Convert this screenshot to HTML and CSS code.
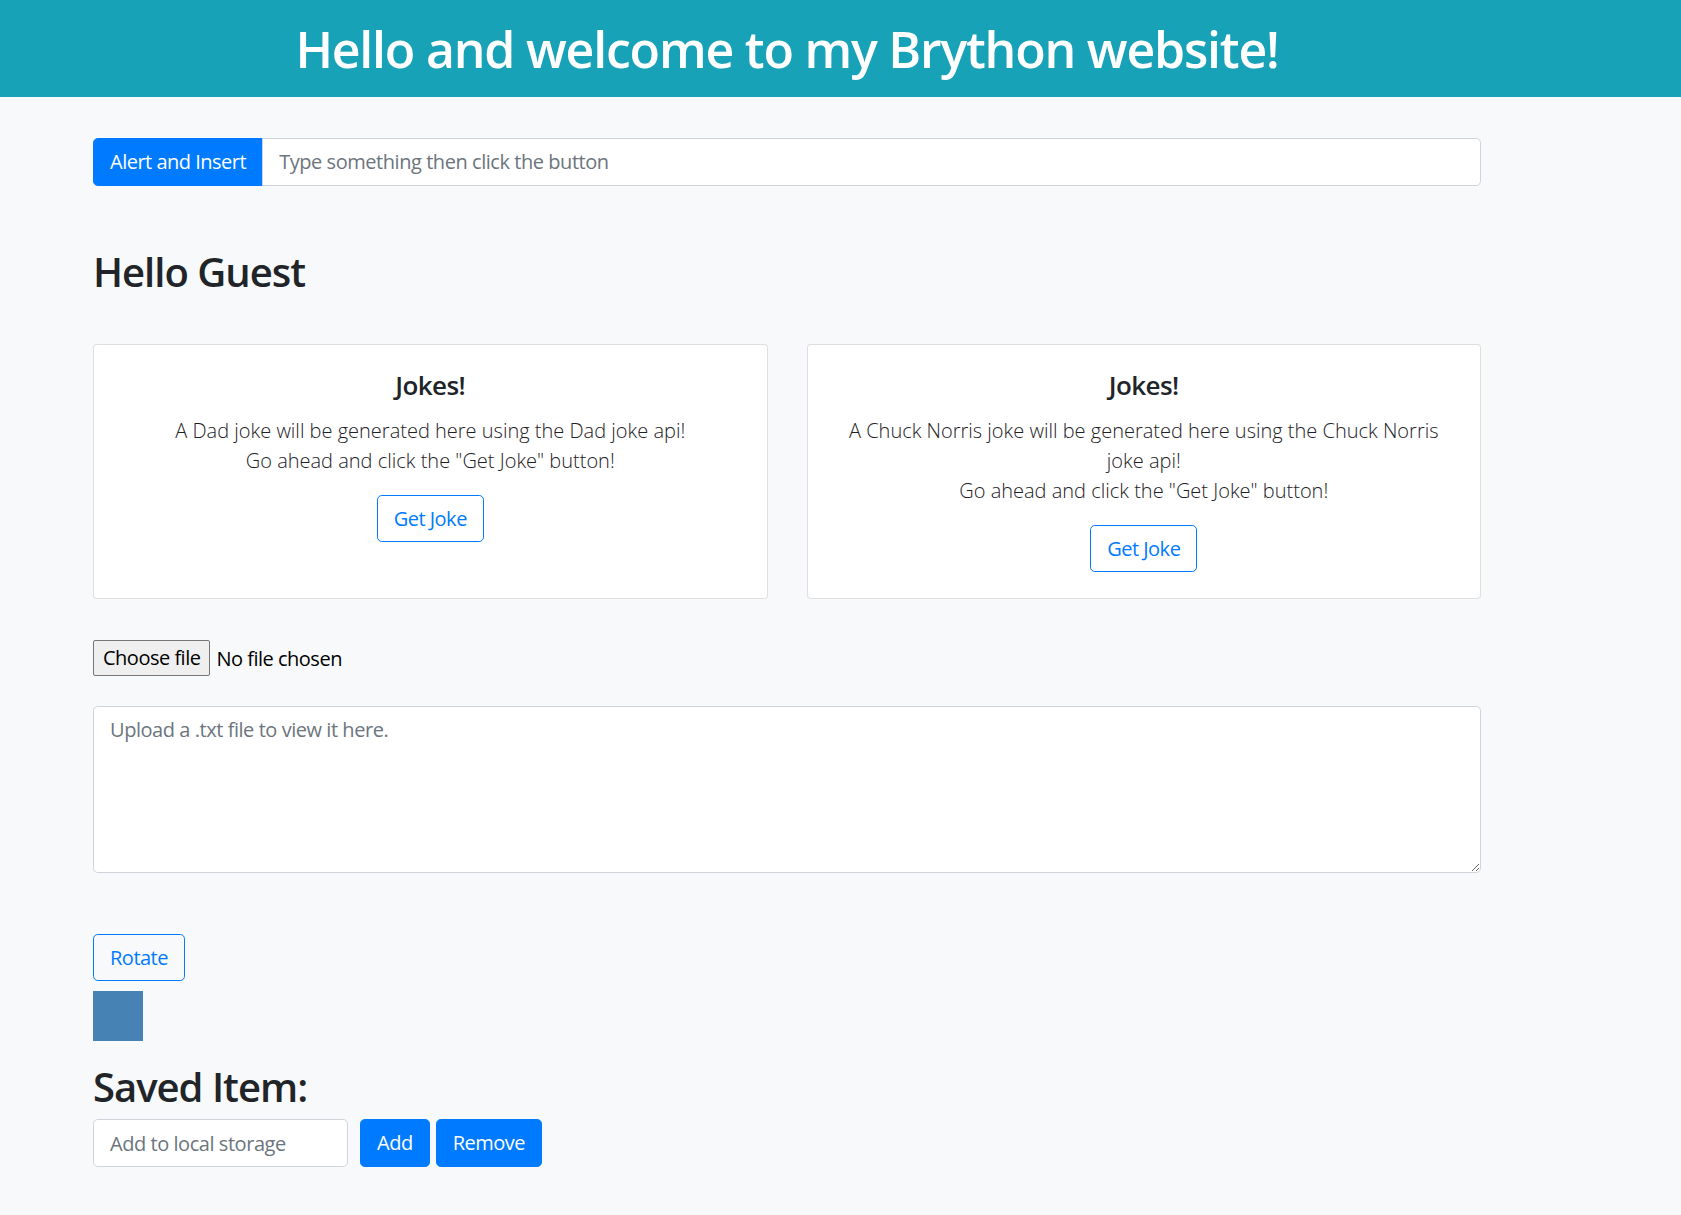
FILE: index.html
```html
<!DOCTYPE html>
<html lang="en">
<head>
<meta charset="utf-8">
<title>Brython website</title>
<link rel="stylesheet" href="styles.css">
</head>
<body>
<header class="banner">
  <div class="banner-inner">
    <h1 class="banner-title">Hello and welcome to my Brython website!</h1>
  </div>
</header>
<main class="container">
  <div class="input-group">
    <button class="btn-solid btn-attached" type="button">Alert and Insert</button>
    <input class="form-control attached" type="text" placeholder="Type something then click the button">
  </div>

  <h1 class="greet">Hello Guest</h1>

  <div class="cards">
    <div class="card">
      <h4 class="card-title">Jokes!</h4>
      <p class="lead">A Dad joke will be generated here using the Dad joke api!<br>Go ahead and click the "Get Joke" button!</p>
      <button class="btn-outline" type="button">Get Joke</button>
    </div>
    <div class="card">
      <h4 class="card-title">Jokes!</h4>
      <p class="lead">A Chuck Norris joke will be generated here using the Chuck Norris<br>joke api!<br>Go ahead and click the "Get Joke" button!</p>
      <button class="btn-outline" type="button">Get Joke</button>
    </div>
  </div>

  <div class="file-row">
    <span class="file-btn">Choose file</span>
    <span class="file-name">No file chosen</span>
  </div>

  <textarea class="form-control text-area" rows="5" placeholder="Upload a .txt file to view it here."></textarea>

  <button class="btn-outline rotate" type="button">Rotate</button>
  <div class="square"></div>

  <h1 class="saved">Saved Item:</h1>
  <div class="storage-row">
    <input class="form-control storage-input" type="text" placeholder="Add to local storage">
    <button class="btn-solid add" type="button">Add</button>
    <button class="btn-solid remove" type="button">Remove</button>
  </div>
</main>
</body>
</html>
```

FILE: styles.css
```css
* { box-sizing: border-box; }

body {
  margin: 0;
  background: #f8f9fa;
  color: #212529;
  font-family: "Segoe UI", "Open Sans", "Noto Sans", sans-serif;
  font-size: 16px;
}

.banner {
  background: #17a2b8;
  height: 97px;
  display: flex;
  align-items: center;
}

.banner-inner {
  width: 1388px;
  margin-left: 93px;
  text-align: center;
}

.banner-title {
  margin: 0;
  color: #fff;
  font-size: 50px;
  font-weight: 600;
  letter-spacing: -1.2px;
  line-height: 1.2;
}

.container {
  width: 1388px;
  margin-left: 93px;
  padding-bottom: 48px;
}

.input-group {
  display: flex;
  margin-top: 41px;
  height: 48px;
}

.btn-solid {
  font-family: inherit;
  font-size: 20px;
  line-height: 30px;
  letter-spacing: -0.5px;
  padding: 8px 16px;
  color: #fff;
  background: #007bff;
  border: 1px solid #007bff;
  border-radius: 4.8px;
}

.btn-attached {
  border-radius: 4.8px 0 0 4.8px;
  flex: none;
}

.form-control {
  font-family: inherit;
  font-size: 20px;
  line-height: 30px;
  letter-spacing: -0.45px;
  padding: 8px 16px;
  color: #495057;
  background: #fff;
  border: 1px solid #ced4da;
  border-radius: 4.8px;
}

.form-control::placeholder { color: #6c757d; }

.attached {
  flex: 1;
  border-radius: 0 4.8px 4.8px 0;
  margin-left: -1px;
}

.greet {
  font-size: 40px;
  font-weight: 600;
  letter-spacing: -1px;
  line-height: 48px;
  margin: 62px 0 48px;
}

.cards {
  display: grid;
  grid-template-columns: 1fr 1fr;
  column-gap: 39px;
}

.card {
  background: #fff;
  border: 1px solid rgba(0,0,0,.125);
  border-radius: 4px;
  text-align: center;
  padding: 25px 20px 26px;
}

.card-title {
  font-size: 26px;
  font-weight: 600;
  letter-spacing: -0.6px;
  line-height: 31px;
  margin: 0 0 15px;
}

.lead {
  font-size: 20px;
  font-weight: 300;
  line-height: 30px;
  margin: 0 0 19px;
  color: #1d2125;
}

.btn-outline {
  font-family: inherit;
  font-size: 20px;
  line-height: 30px;
  letter-spacing: -0.5px;
  padding: 7.5px 16px;
  color: #007bff;
  background: transparent;
  border: 1px solid #007bff;
  border-radius: 4.8px;
}

.file-row {
  display: flex;
  align-items: center;
  margin-top: 41px;
  height: 36px;
}

.file-btn {
  font-size: 20px;
  line-height: 28px;
  letter-spacing: -0.5px;
  padding: 3px 9px;
  background: #efefef;
  border: 1px solid #767676;
  border-radius: 2px;
  color: #000;
}

.file-name {
  font-size: 20px;
  letter-spacing: -0.5px;
  margin-left: 6px;
  color: #000;
}

.text-area {
  display: block;
  width: 100%;
  height: 167px;
  margin-top: 30px;
  resize: vertical;
}

.rotate {
  display: block;
  margin-top: 61px;
}

.square {
  width: 50px;
  height: 50px;
  background: #4682b4;
  margin-top: 10px;
}

.saved {
  font-size: 40px;
  font-weight: 600;
  letter-spacing: -1px;
  line-height: 48px;
  margin: 22px 0 8px;
}

.storage-row {
  display: flex;
  align-items: center;
}

.storage-input {
  width: 255px;
  height: 48px;
}

.add { margin-left: 12px; }
.remove { margin-left: 6px; }
```
